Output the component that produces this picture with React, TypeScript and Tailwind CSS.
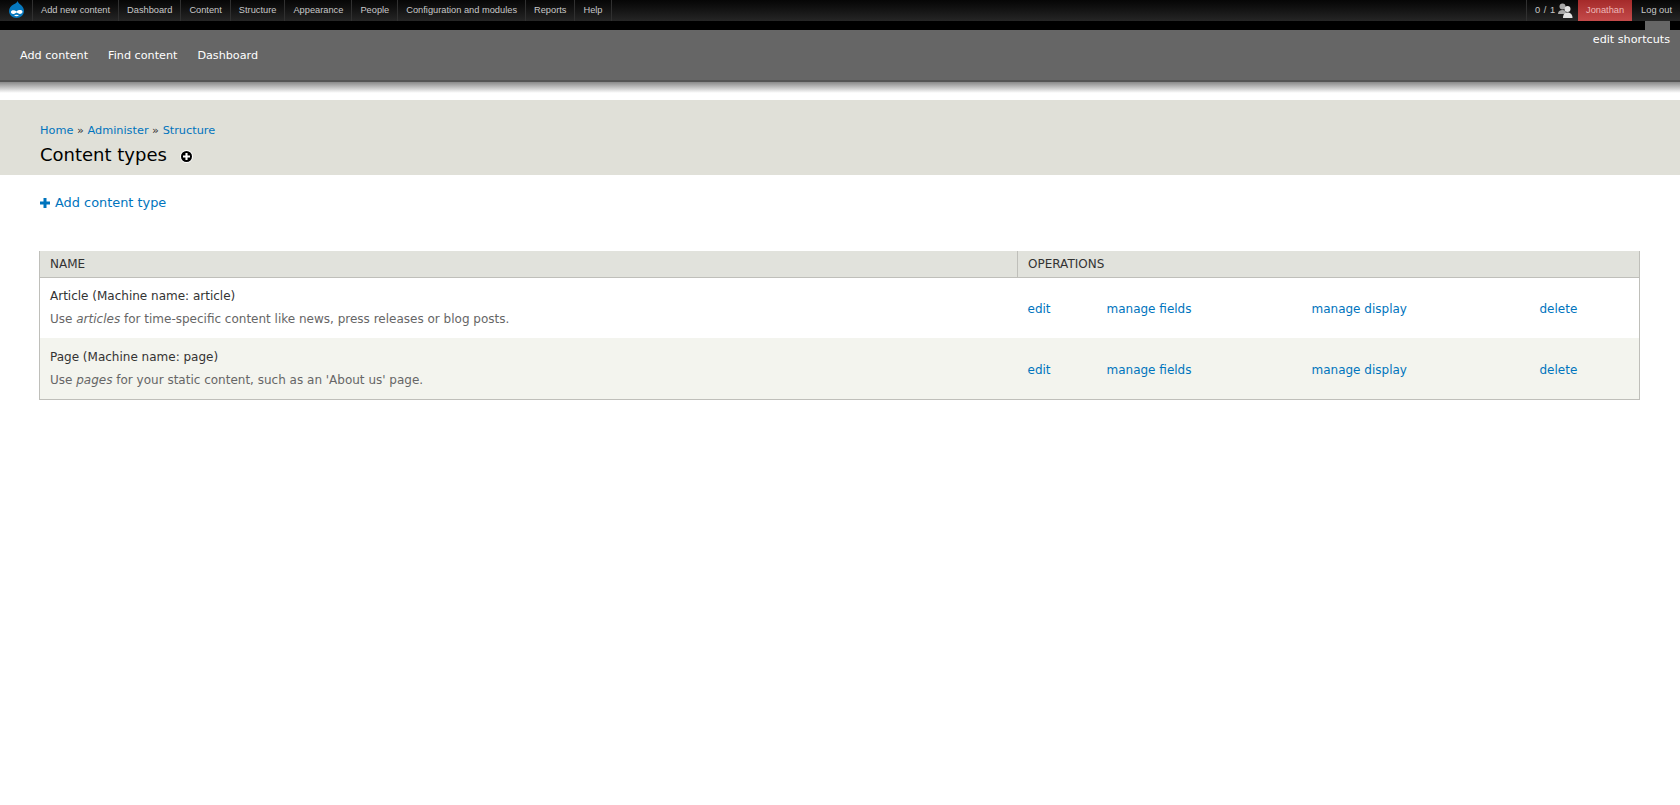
import React from "react";

const menuItems = ["Add new content", "Dashboard", "Content", "Structure", "Appearance", "People", "Configuration and modules", "Reports", "Help"];
const shortcuts = ["Add content", "Find content", "Dashboard"];

const DrupalLogo: React.FC = () => (
  <svg width="15" height="17" viewBox="0 0 15 17">
    <path d="M8.5 0C9 2 11 3 12.5 4.500C14 6 15 8 15 10C15 14 11.500 17 7.500 17C3.500 17 0 14 0 10C0 7 2 5 4 3.800C6 2.600 8 2 8.500 0Z" fill="#0678be" />
    <path d="M2 10.500C3 8.800 5.500 8.800 7.500 10.500C9.500 8.800 12.500 8.500 13.500 10.500C13.800 12.500 11 13.500 9.500 12.500L7.500 11.500L5.500 12.800C3.500 13.500 1.500 12.500 2 10.500Z" fill="#fff" />
    <path d="M5 14.500C6.500 13.500 8.500 13.500 10 14.500C8.500 15.500 6.500 15.500 5 14.500Z" fill="#fff" />
  </svg>
);

const UsersIcon: React.FC = () => (
  <svg width="15" height="15" viewBox="0 0 15 15">
    <circle cx="4.500" cy="3.500" r="3" fill="#a8a8a8" />
    <path d="M0 11C0 8 2 7 4.500 7C7 7 8 8 8 11Z" fill="#a8a8a8" />
    <circle cx="9.500" cy="6" r="3" fill="#e2e2e2" />
    <path d="M5 15C5 11 7 9.500 9.500 9.500C12 9.500 14.500 11 14.500 15Z" fill="#e2e2e2" />
  </svg>
);

const PlusIcon: React.FC<{ className?: string }> = ({ className }) => (
  <svg viewBox="0 0 10 10" className={className} fill="currentColor">
    <path d="M3.500 0H6.500V3.500H10V6.500H6.500V10H3.500V6.500H0V3.500H3.500Z" />
  </svg>
);

const Toolbar: React.FC = () => (
  <div className="flex h-[21px] items-stretch justify-between bg-gradient-to-b from-[#060606] to-[#262626] font-['Liberation_Sans',sans-serif] text-[9.28px] leading-[21px] text-[#c8c8c8]">
    <div className="flex items-stretch">
      <div className="flex w-[33px] items-start justify-end border-r border-[#303030] pr-[8px] pt-[1px]">
        <DrupalLogo />
      </div>
      {menuItems.map((item) => (
        <a key={item} href="#" className="border-r border-[#303030] px-[8px]">
          {item}
        </a>
      ))}
    </div>
    <div className="flex items-stretch">
      <div className="flex items-center gap-[3px] border-l border-[#303030] pl-[8px] pr-[5px]">
        <span className="[word-spacing:1px]">0 / 1</span>
        <UsersIcon />
      </div>
      <a href="#" className="w-[54px] bg-gradient-to-b from-[#a52a2a] to-[#c44a4a] text-center text-[#eeb8b8]">
        Jonathan
      </a>
      <a href="#" className="pl-[9px] pr-[8px]">
        Log out
      </a>
    </div>
  </div>
);

const Shortcuts: React.FC = () => (
  <div>
    <div className="flex h-[9px] justify-end bg-black">
      <div className="mr-[10px] w-[25px] bg-[#666666]" />
    </div>
    <div className="relative flex h-[52px] items-center gap-[20px] border-b-2 border-[#555555] bg-[#666666] pl-[20px] pt-[3px] text-[11.2px] text-white">
      {shortcuts.map((item) => (
        <a key={item} href="#">
          {item}
        </a>
      ))}
      <a href="#" className="absolute right-[10px] top-[2px]">
        edit shortcuts
      </a>
    </div>
    <div className="h-[11px] bg-gradient-to-b from-[#8a8a8a] to-[#ffffff]" />
    <div className="h-[7px] bg-white" />
  </div>
);

const PageTitle: React.FC = () => (
  <div className="h-[75px] bg-[#e0e0d8] pl-[40px] pt-[23px]">
    <div className="text-[11.3px] leading-[16px] text-[#333333]">
      <a href="#" className="text-[#0074bd]">Home</a> » <a href="#" className="text-[#0074bd]">Administer</a> » <a href="#" className="text-[#0074bd]">Structure</a>
    </div>
    <div className="mt-[4px] flex items-center">
      <h1 className="text-[18px] font-normal leading-[24px] text-black">Content types</h1>
      <span className="ml-[14px] mt-[3px] flex h-[11px] w-[11px] items-center justify-center rounded-full bg-black ring-1 ring-white">
        <PlusIcon className="h-[7px] w-[7px] text-white" />
      </span>
    </div>
  </div>
);

interface RowProps {
  title: string;
  before: string;
  em: string;
  after: string;
  even?: boolean;
}

const Row: React.FC<RowProps> = ({ title, before, em, after, even }) => {
  const linkCell = even ? "px-[10px] pt-[4px]" : "px-[10px] pt-[2px]";
  return (
    <tr className={`h-[61px] ${even ? "bg-[#f3f4ee]" : "bg-white"}`}>
      <td className={`px-[10px] align-middle ${even ? "pt-[1px]" : "pb-[1px]"}`}>
        <div className="text-[12px] leading-[18px] text-[#333333]">{title}</div>
        <div className="mt-[5px] text-[12px] leading-[18px] text-[#666666]">
          {before}
          <em>{em}</em>
          {after}
        </div>
      </td>
      <td className={linkCell}><a href="#" className="text-[#0074bd]">edit</a></td>
      <td className={linkCell}><a href="#" className="text-[#0074bd]">manage fields</a></td>
      <td className={linkCell}><a href="#" className="text-[#0074bd]">manage display</a></td>
      <td className={linkCell}><a href="#" className="text-[#0074bd]">delete</a></td>
    </tr>
  );
};

const App: React.FC = () => {
  return (
    <div className="min-h-screen bg-white font-['DejaVu_Sans',sans-serif]">
      <Toolbar />
      <Shortcuts />
      <PageTitle />

      {/* Content */}
      <div className="px-[39px] pt-[18px]">
        <a href="#" className="flex items-center pl-[1px] pt-[1px] text-[12.9px] leading-[18px] text-[#0074bd]">
          <PlusIcon className="mr-[5px] h-[10px] w-[10px]" />
          Add content type
        </a>

        <table className="mt-[39px] w-[1601px] table-fixed border-collapse border border-t-0 border-[#bfbfba] text-[12px]">
          <colgroup>
            <col className="w-[978px]" />
            <col className="w-[79px]" />
            <col className="w-[205px]" />
            <col className="w-[228px]" />
            <col />
          </colgroup>
          <thead>
            <tr className="h-[26px] border-b border-[#bfbfba] bg-[#e1e2dc] text-left text-[12px] uppercase text-[#333333]">
              <th className="border-r border-[#bfbfba] px-[10px] font-normal">Name</th>
              <th colSpan={4} className="px-[10px] font-normal">Operations</th>
            </tr>
          </thead>
          <tbody>
            <Row title="Article (Machine name: article)" before="Use " em="articles" after=" for time-specific content like news, press releases or blog posts." />
            <Row title="Page (Machine name: page)" before="Use " em="pages" after=" for your static content, such as an 'About us' page." even />
          </tbody>
        </table>
      </div>
    </div>
  );
};

export default App;
